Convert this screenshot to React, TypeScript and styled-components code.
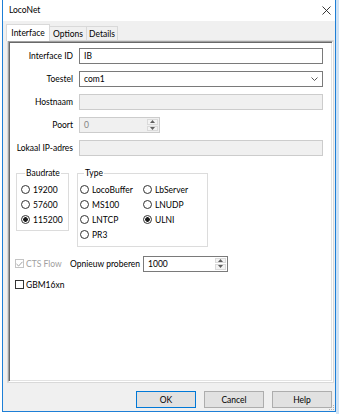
import styled, { createGlobalStyle } from 'styled-components'

const FONT = `Lato, 'Segoe UI', 'Noto Sans', sans-serif`

const GlobalStyle = createGlobalStyle`
  html, body {
    margin: 0;
    padding: 0;
    background: #ffffff;
    font-family: ${FONT};
    font-size: 8.5px;
    color: #000000;
  }
`

const Screen = styled.div`
  display: flex;
  align-items: flex-start;
  width: 339px;
  height: 414px;
  overflow: hidden;
  background: #ffffff;
`

const Gutter = styled.div`
  width: 2px;
  height: 100%;
  flex: none;
`

const Backdrop = styled.div`
  flex: 1;
  height: 100%;
  background: #cfe3f6;
`

const Window = styled.div`
  position: relative;
  width: 334px;
  height: 412px;
  flex: none;
  box-sizing: border-box;
  border: 1px solid #1e7fd6;
  border-top: none;
  background: #f0f0f0;
  display: flex;
  flex-direction: column;
`

const TitleBar = styled.div`
  height: 21px;
  flex: none;
  background: #ffffff;
  display: flex;
  align-items: center;
  justify-content: space-between;
  padding: 0 4px 1px 6px;
  box-sizing: border-box;
`

const Client = styled.div`
  flex: 1;
  display: flex;
  flex-direction: column;
  padding: 3px 1px 0 4px;
  min-height: 0;
`

const TabStrip = styled.div`
  display: flex;
  align-items: flex-end;
  height: 16px;
  flex: none;
`

const Tab = styled.div<{ $active?: boolean; $width: number }>`
  position: relative;
  z-index: ${(p) => (p.$active ? 1 : 0)};
  box-sizing: border-box;
  width: ${(p) => p.$width}px;
  height: ${(p) => (p.$active ? 17 : 14)}px;
  margin-left: ${(p) => (p.$active ? -1 : -1)}px;
  margin-bottom: ${(p) => (p.$active ? -1 : 0)}px;
  border: 1px solid #d9d9d9;
  border-bottom: none;
  background: ${(p) => (p.$active ? '#ffffff' : '#f0f0f0')};
  display: flex;
  align-items: center;
  justify-content: center;
  white-space: nowrap;
`

const TabPanel = styled.div`
  flex: 1;
  display: flex;
  border: 1px solid #d9d9d9;
  background: #ffffff;
  min-height: 0;
`

const Sunken = styled.div`
  flex: 1;
  display: flex;
  flex-direction: column;
  border: 1px solid;
  border-color: #a0a0a0 #ffffff #ffffff #a0a0a0;
  box-shadow: inset 1px 1px 0 #696969, inset -1px -1px 0 #e3e3e3;
  padding: 1px;
`

const Form = styled.div`
  display: grid;
  grid-template-columns: 63px 244px;
  grid-auto-rows: 16px;
  column-gap: 6px;
  row-gap: 7px;
  align-items: center;
  padding-top: 5px;
`

const Label = styled.label`
  text-align: right;
  white-space: nowrap;
`

const TextBox = styled.input`
  box-sizing: border-box;
  width: 100%;
  height: 16px;
  margin: 0;
  padding: 0 4px;
  border: 1px solid ${(p) => (p.disabled ? '#cccccc' : '#7a7a7a')};
  background: ${(p) => (p.disabled ? '#f0f0f0' : '#ffffff')};
  color: ${(p) => (p.disabled ? '#838383' : '#000000')};
  font: inherit;
  outline: none;
`

const Combo = styled.div`
  box-sizing: border-box;
  height: 16px;
  border: 1px solid #7a7a7a;
  background: #ffffff;
  display: flex;
  align-items: center;
  justify-content: space-between;
  padding: 0 4px 0 4px;
`

const Spin = styled.div<{ $width: number; $disabled?: boolean }>`
  box-sizing: border-box;
  width: ${(p) => p.$width}px;
  height: 16px;
  display: flex;
  border: 1px solid ${(p) => (p.$disabled ? '#cccccc' : '#7a7a7a')};
  background: ${(p) => (p.$disabled ? '#f0f0f0' : '#ffffff')};
  color: ${(p) => (p.$disabled ? '#838383' : '#000000')};
`

const SpinValue = styled.div`
  flex: 1;
  display: flex;
  align-items: center;
  padding-left: 4px;
`

const SpinButtons = styled.div`
  width: 11px;
  display: flex;
  flex-direction: column;
  padding: 1px 1px 1px 0;
  gap: 1px;
`

const SpinHalf = styled.div`
  flex: 1;
  background: #f3f3f3;
  border: 1px solid #dadada;
  display: flex;
  align-items: center;
  justify-content: center;
`

const Groups = styled.div`
  display: flex;
  align-items: flex-start;
  gap: 8px;
  padding-left: 6px;
  margin-top: 11px;
`

const GroupBox = styled.fieldset<{ $width: number; $pad: string }>`
  box-sizing: border-box;
  width: ${(p) => p.$width}px;
  margin: 0;
  padding: ${(p) => p.$pad};
  border: 1px solid #dcdcdc;
  min-width: 0;
`

const Legend = styled.legend`
  padding: 0 1px;
  margin-left: 4px;
  line-height: 12px;
`

const RadioColumn = styled.div`
  display: flex;
  flex-direction: column;
`

const RadioGrid = styled.div`
  display: grid;
  grid-template-columns: 63px auto;
  grid-template-rows: repeat(4, 15px);
  grid-auto-flow: column;
`

const Option = styled.div`
  display: flex;
  align-items: center;
  gap: 3px;
  height: 15px;
  white-space: nowrap;
`

const Circle = styled.span<{ $checked?: boolean }>`
  box-sizing: border-box;
  width: 9px;
  height: 9px;
  border: 1px solid #333333;
  border-radius: 50%;
  background: ${(p) =>
    p.$checked
      ? 'radial-gradient(circle, #1a1a1a 0 2px, #ffffff 2.6px)'
      : '#ffffff'};
  flex: none;
`

const OptionRow = styled.div<{ $gap: number }>`
  display: flex;
  align-items: center;
  height: 15px;
  padding-left: 5px;
  margin-top: ${(p) => p.$gap}px;
`

const CheckItem = styled.div<{ $disabled?: boolean; $width?: number }>`
  display: flex;
  align-items: center;
  gap: 2px;
  width: ${(p) => (p.$width ? `${p.$width}px` : 'auto')};
  color: ${(p) => (p.$disabled ? '#a0a0a0' : '#000000')};
  white-space: nowrap;
`

const Box = styled.span<{ $disabled?: boolean }>`
  box-sizing: border-box;
  width: 9px;
  height: 9px;
  border: 1px solid ${(p) => (p.$disabled ? '#c4c4c4' : '#333333')};
  background: #ffffff;
  display: flex;
  align-items: center;
  justify-content: center;
  flex: none;
`

const RetryLabel = styled.span`
  margin-right: 3px;
  white-space: nowrap;
`

const ButtonRow = styled.div`
  display: flex;
  justify-content: flex-end;
  gap: 8px;
  padding: 8px 2px 3px 0;
  flex: none;
`

const Button = styled.button<{ $primary?: boolean }>`
  box-sizing: border-box;
  width: 60px;
  height: 17px;
  margin: 0;
  padding: 0;
  font: inherit;
  color: #000000;
  background: #e1e1e1;
  border: 1px solid ${(p) => (p.$primary ? '#0078d7' : '#adadad')};
`

const Grip = styled.svg`
  position: absolute;
  right: 0;
  bottom: 0;
`

const Arrow = ({ up }: { up?: boolean }) => (
  <svg width="5" height="3" viewBox="0 0 5 3">
    <path d={up ? 'M0 3 L2.5 0 L5 3 Z' : 'M0 0 L2.5 3 L5 0 Z'} fill="#606060" />
  </svg>
)

const SpinBox = ({ value, width, disabled }: { value: string; width: number; disabled?: boolean }) => (
  <Spin $width={width} $disabled={disabled}>
    <SpinValue>{value}</SpinValue>
    <SpinButtons>
      <SpinHalf>
        <Arrow up />
      </SpinHalf>
      <SpinHalf>
        <Arrow />
      </SpinHalf>
    </SpinButtons>
  </Spin>
)

const Radio = ({ label, checked }: { label: string; checked?: boolean }) => (
  <Option>
    <Circle $checked={checked} />
    {label}
  </Option>
)

const Check = ({ label, checked, disabled, width }: { label: string; checked?: boolean; disabled?: boolean; width?: number }) => (
  <CheckItem $disabled={disabled} $width={width}>
    <Box $disabled={disabled}>
      {checked && (
        <svg width="7" height="6" viewBox="0 0 7 6">
          <path d="M0.5 3 L2.6 5 L6.5 0.8" fill="none" stroke="#a0a0a0" strokeWidth="1" />
        </svg>
      )}
    </Box>
    {label}
  </CheckItem>
)

export default function App() {
  return (
    <Screen>
      <GlobalStyle />
      <Gutter />
      <Window>
        <TitleBar>
          <span>LocoNet</span>
          <svg width="9" height="9" viewBox="0 0 9 9">
            <path d="M0.5 0.5 L8.5 8.5 M8.5 0.5 L0.5 8.5" stroke="#222" strokeWidth="0.9" />
          </svg>
        </TitleBar>
        <Client>
          <TabStrip>
            <Tab $active $width={44}>Interface</Tab>
            <Tab $width={38}>Options</Tab>
            <Tab $width={32}>Details</Tab>
          </TabStrip>
          <TabPanel>
            <Sunken>
              <Form>
                <Label>Interface ID</Label>
                <TextBox defaultValue="IB" />
                <Label>Toestel</Label>
                <Combo>
                  <span>com1</span>
                  <svg width="7" height="4" viewBox="0 0 7 4">
                    <path d="M0.5 0.5 L3.5 3.5 L6.5 0.5" fill="none" stroke="#444" strokeWidth="0.9" />
                  </svg>
                </Combo>
                <Label>Hostnaam</Label>
                <TextBox disabled />
                <Label>Poort</Label>
                <SpinBox value="0" width={81} disabled />
                <Label>Lokaal IP-adres</Label>
                <TextBox disabled />
              </Form>
              <Groups>
                <GroupBox $width={53} $pad="3px 0 3px 4px">
                  <Legend>Baudrate</Legend>
                  <RadioColumn>
                    <Radio label="19200" />
                    <Radio label="57600" />
                    <Radio label="115200" checked />
                  </RadioColumn>
                </GroupBox>
                <GroupBox $width={131} $pad="3px 0 4px 2px">
                  <Legend>Type</Legend>
                  <RadioGrid>
                    <Radio label="LocoBuffer" />
                    <Radio label="MS100" />
                    <Radio label="LNTCP" />
                    <Radio label="PR3" />
                    <Radio label="LbServer" />
                    <Radio label="LNUDP" />
                    <Radio label="ULNI" checked />
                  </RadioGrid>
                </GroupBox>
              </Groups>
              <OptionRow $gap={9}>
                <Check label="CTS Flow" checked disabled width={55} />
                <RetryLabel>Opnieuw proberen</RetryLabel>
                <SpinBox value="1000" width={85} />
              </OptionRow>
              <OptionRow $gap={6}>
                <Check label="GBM16xn" />
              </OptionRow>
            </Sunken>
          </TabPanel>
          <ButtonRow>
            <Button $primary>OK</Button>
            <Button>Cancel</Button>
            <Button>Help</Button>
          </ButtonRow>
        </Client>
        <Grip width="6" height="6" viewBox="0 0 6 6">
          <rect x="4" y="0" width="1" height="1" fill="#b0b0b0" />
          <rect x="2" y="2" width="1" height="1" fill="#b0b0b0" />
          <rect x="4" y="2" width="1" height="1" fill="#b0b0b0" />
          <rect x="0" y="4" width="1" height="1" fill="#b0b0b0" />
          <rect x="2" y="4" width="1" height="1" fill="#b0b0b0" />
          <rect x="4" y="4" width="1" height="1" fill="#b0b0b0" />
        </Grip>
      </Window>
      <Backdrop />
    </Screen>
  )
}
